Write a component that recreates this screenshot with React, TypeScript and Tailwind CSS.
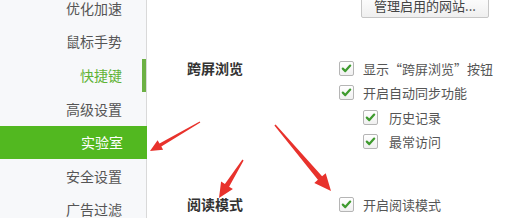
import React from 'react';

const menuItems = ['优化加速', '鼠标手势', '快捷键', '高级设置', '实验室', '安全设置', '广告过滤'];

// tapered arrow: thin tail widening to a triangular head
const arrowPoints = (
  tx: number, ty: number, px: number, py: number,
  w0: number, w1: number, hl: number, hw: number
) => {
  const dx = px - tx;
  const dy = py - ty;
  const len = Math.sqrt(dx * dx + dy * dy);
  const ux = dx / len;
  const uy = dy / len;
  const nx = -uy;
  const ny = ux;
  const bx = px - ux * hl;
  const by = py - uy * hl;
  const pts = [
    [tx + nx * w0 / 2, ty + ny * w0 / 2],
    [bx + nx * w1 / 2, by + ny * w1 / 2],
    [bx + nx * hw / 2, by + ny * hw / 2],
    [px, py],
    [bx - nx * hw / 2, by - ny * hw / 2],
    [bx - nx * w1 / 2, by - ny * w1 / 2],
    [tx - nx * w0 / 2, ty - ny * w0 / 2],
  ];
  return pts.map((p) => p[0].toFixed(1) + ',' + p[1].toFixed(1)).join(' ');
};

const CheckBox = () => (
  <span className="w-[15px] h-[15px] shrink-0 border border-[#b5b5b5] rounded-[2px] bg-gradient-to-b from-white to-[#f0f0f0] flex items-center justify-center">
    <svg width="11" height="11" viewBox="0 0 11 11">
      <path d="M1.8 5.6 L4.3 8.1 L9.2 2.6" fill="none" stroke="#3f9b2f" strokeWidth="2.2" strokeLinecap="round" strokeLinejoin="round" />
    </svg>
  </span>
);

const Option = ({ text, indent }: { text: string; indent?: boolean }) => (
  <div className={`flex items-center h-[24.5px] ${indent ? 'pl-[24px] gap-[11px]' : 'gap-[9px]'}`}>
    <CheckBox />
    <span className="text-[13px] text-[#555] whitespace-nowrap">{text}</span>
  </div>
);

const App = () => {
  return (
    <div
      className="relative w-[506px] h-[218px] overflow-hidden bg-white flex"
      style={{ fontFamily: '"Noto Sans CJK SC", "Noto Sans", sans-serif' }}
    >
      {/* sidebar */}
      <div className="w-[147px] h-full shrink-0 bg-[#f7f8fa] border-r border-[#d9d9d9]">
        <div className="-mt-[8.5px] flex flex-col">
          {menuItems.map((item) => {
            const active = item === '实验室';
            const hover = item === '快捷键';
            return (
              <div
                key={item}
                className={`relative h-[33.6px] flex items-center justify-end pr-[24px] text-[14px] ${
                  active ? 'bg-[#52b820] text-white -mr-px' : hover ? 'text-[#5fb336]' : 'text-[#555]'
                }`}
              >
                {item}
                {hover && <span className="absolute right-0 top-0 w-[4px] h-full bg-[#6cb044]" />}
              </div>
            );
          })}
        </div>
      </div>

      {/* main */}
      <div className="flex-1 pl-[40px]">
        <button className="-mt-[6px] ml-[174px] w-[128px] h-[24px] border border-[#c6c6c6] rounded-[2px] bg-gradient-to-b from-white to-[#efefef] text-[13px] text-[#444] flex items-center justify-center">
          管理启用的网站...
        </button>

        <div className="mt-[38px] flex">
          <div className="w-[152px] h-[24.5px] flex items-center text-[14px] font-bold text-[#333]">跨屏浏览</div>
          <div className="flex flex-col">
            <Option text="显示“跨屏浏览”按钮" />
            <Option text="开启自动同步功能" />
            <Option text="历史记录" indent />
            <Option text="最常访问" indent />
          </div>
        </div>

        <div className="mt-[38px] flex">
          <div className="w-[152px] h-[24.5px] flex items-center text-[14px] font-bold text-[#333]">阅读模式</div>
          <div className="flex flex-col">
            <Option text="开启阅读模式" />
          </div>
        </div>
      </div>

      {/* red annotation arrows */}
      <svg className="absolute inset-0 pointer-events-none" width="506" height="218">
        <polygon points={arrowPoints(200, 122, 150, 151, 1.2, 3.5, 12, 11)} fill="#e8322c" />
        <polygon points={arrowPoints(243, 160, 219, 198, 1.5, 5, 15, 14)} fill="#e8322c" />
        <polygon points={arrowPoints(275, 125, 331, 191, 1.5, 5.5, 17, 15)} fill="#e8322c" />
      </svg>
    </div>
  );
};

export default App;
